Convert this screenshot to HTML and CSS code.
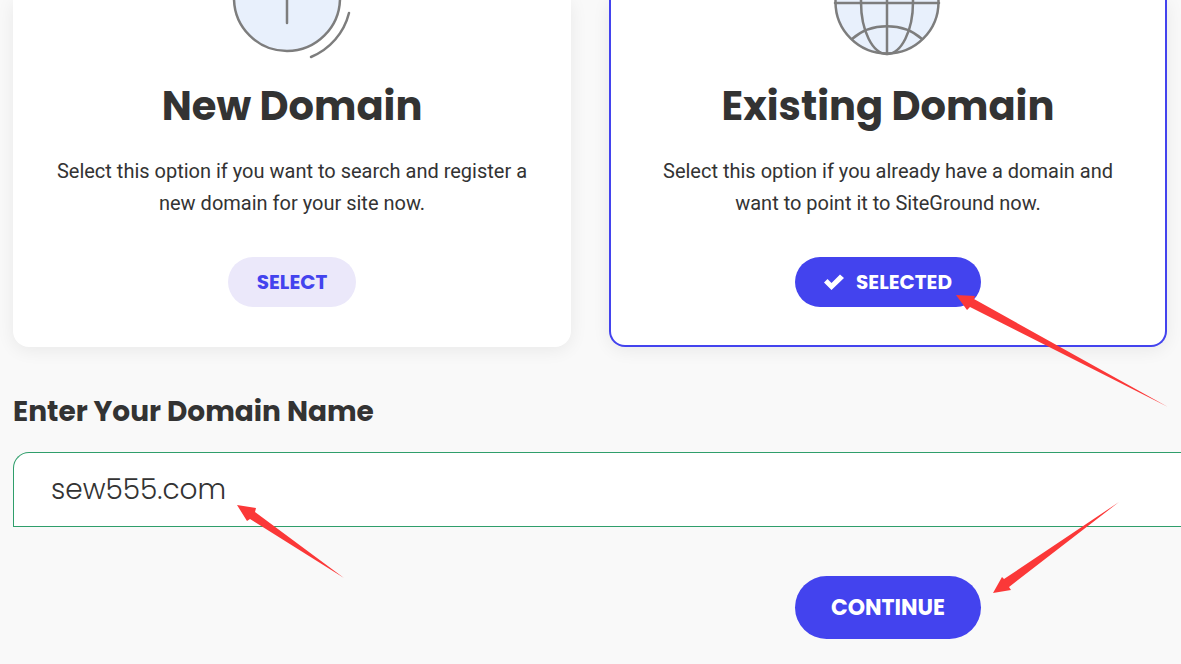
FILE: index.html
```html
<!DOCTYPE html>
<html lang="en">
<head>
<meta charset="UTF-8" />
<meta name="viewport" content="width=device-width, initial-scale=1" />
<title>Choose Domain</title>
<link rel="stylesheet" href="styles.css">
</head>
<body>
  <main class="page">
    <section class="options" aria-label="Domain options">
      <article class="card">
        <svg class="card-icon" width="160" height="60" viewBox="0 0 160 60" aria-hidden="true">
          <circle class="icon-fill" cx="75" cy="-2" r="53" />
          <path d="M75-20V23" />
          <path d="M137 13C132 33 118 49 99 57" />
        </svg>
        <h2>New Domain</h2>
        <p>Select this option if you want to search and register a new domain for your site now.</p>
        <button type="button" class="btn btn-light">Select</button>
      </article>

      <article class="card card-selected">
        <svg class="card-icon" width="160" height="60" viewBox="0 0 160 60" aria-hidden="true">
          <circle class="icon-fill" cx="79" cy="2" r="51.500" />
          <path d="M79-50V54M27 3H131" />
          <ellipse cx="79" cy="2" rx="26" ry="52" />
          <path d="M44 39C63 22 95 22 114 39" />
        </svg>
        <h2>Existing Domain</h2>
        <p>Select this option if you already have a domain and want to point it to SiteGround now.</p>
        <div class="action">
          <button type="button" class="btn btn-primary">
            <svg width="20" height="16" viewBox="0 0 20 16" aria-hidden="true">
              <path d="M0 8.500L3.500 5L7.500 9L16 0.500L20 4L7.500 16Z" fill="currentColor" />
            </svg>
            Selected
          </button>
          <svg class="arrow arrow-selected" width="214" height="116" viewBox="0 0 214 116" aria-hidden="true">
            <path d="M0 0L19 1L18 4L212 112L14 12L11 15Z" />
          </svg>
        </div>
      </article>
    </section>

    <form class="domain-form">
      <label for="domain">Enter Your Domain Name</label>
      <div class="field">
        <input type="text" id="domain" name="domain" value="sew555.com" autocomplete="off" spellcheck="false" />
        <svg class="arrow arrow-field" width="108" height="74" viewBox="0 0 108 74" aria-hidden="true">
          <path d="M0 0L19 3L18 7L107 73L13 14L10 16Z" />
        </svg>
      </div>
      <div class="submit-row">
        <div class="action">
          <button type="submit" class="btn btn-primary btn-large">Continue</button>
          <svg class="arrow arrow-continue" width="128" height="92" viewBox="0 0 128 92" aria-hidden="true">
            <path d="M0 91L9 75L11 77L126 0L16 85L18 88Z" />
          </svg>
        </div>
      </div>
    </form>
  </main>
</body>
</html>
```

FILE: styles.css
```css
:root {
  --color-primary: #4343ee;
  --color-light: #ebe8fa;
  --color-bg: #f9f9f9;
  --color-text: #333;
  --color-valid: #2f9e6b;
  --color-arrow: #fb3838;
  --font-heading: Poppins, Inter, sans-serif;
  --font-body: Roboto, sans-serif;
}
* {
  box-sizing: border-box;
}
body {
  margin: 0;
  background: var(--color-bg);
  font-family: var(--font-body);
  color: var(--color-text);
}
.page {
  padding: 0 14px 24px 13px;
  overflow: hidden;
}
.options,
.submit-row {
  display: grid;
  grid-template-columns: 1fr 1fr;
  column-gap: 38px;
}
.card {
  display: flex;
  flex-direction: column;
  align-items: center;
  padding: 0 40px 38px;
  background: #fff;
  border: 2px solid transparent;
  border-top: none;
  border-radius: 0 0 16px 16px;
  box-shadow: 0 3px 18px rgba(0, 0, 0, 0.07);
  text-align: center;
}
.card-selected {
  border-color: var(--color-primary);
}
.card-icon {
  fill: none;
  stroke: #7d7d7d;
  stroke-width: 2.5;
  stroke-linecap: round;
}
.icon-fill {
  fill: #e8f0fc;
}
h2 {
  margin: 22px 0 25px;
  font-family: var(--font-heading);
  font-weight: 700;
  font-size: 40px;
  line-height: 48px;
}
p {
  margin: 0 0 38px;
  font-size: 20px;
  line-height: 32px;
}
.btn {
  display: flex;
  align-items: center;
  justify-content: center;
  gap: 12px;
  height: 50px;
  padding: 0 29px;
  border: none;
  border-radius: 32px;
  font-family: var(--font-heading);
  font-weight: 700;
  font-size: 20px;
  text-transform: uppercase;
  cursor: pointer;
}
.btn-light {
  background: var(--color-light);
  color: var(--color-primary);
}
.btn-primary {
  background: var(--color-primary);
  color: #fff;
}
.btn-large {
  height: 63px;
  padding: 0 36px;
  font-size: 22px;
}
.domain-form label {
  display: block;
  margin: 45px 0 20px;
  font-family: var(--font-heading);
  font-weight: 700;
  font-size: 28px;
  line-height: 40px;
}
/* the field runs past the right edge of the page */
.field {
  position: relative;
  margin-right: -14px;
}
.field input {
  display: block;
  width: 100%;
  height: 75px;
  padding: 0 37px;
  background: #fff;
  border: 1px solid var(--color-valid);
  border-right: none;
  border-radius: 16px 0 0 0;
  font-family: var(--font-heading);
  font-weight: 300;
  font-size: 28px;
  color: var(--color-text);
  outline: none;
}
.submit-row {
  margin-top: 49px;
}
.submit-row .action {
  grid-column: 2;
  justify-self: center;
}
.action {
  position: relative;
}
/* Pointers */
.arrow {
  position: absolute;
  z-index: 1;
  fill: var(--color-arrow);
  pointer-events: none;
}
.arrow-selected {
  left: calc(100% - 25px);
  top: 38px;
}
.arrow-field {
  left: 224px;
  top: 53px;
}
.arrow-continue {
  left: calc(100% + 12px);
  bottom: 45px;
}
```
